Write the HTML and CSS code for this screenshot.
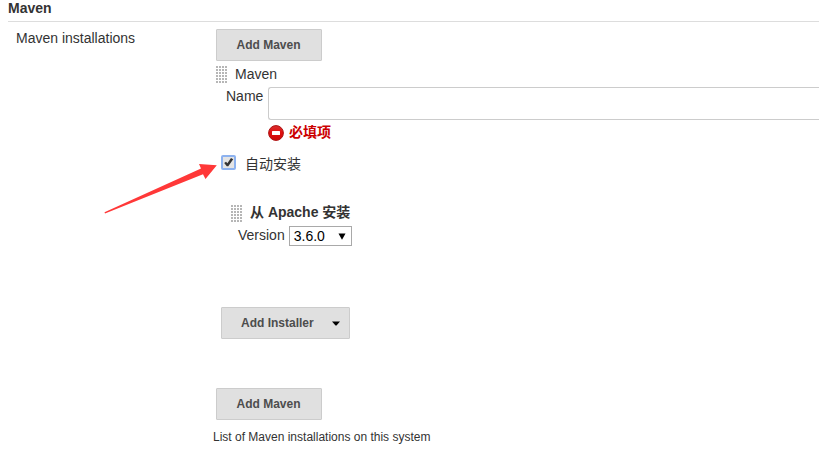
FILE: index.html
```html
<!DOCTYPE html>
<html lang="zh">
<head>
<meta charset="utf-8">
<title>Maven</title>
<link rel="stylesheet" href="styles.css">
</head>
<body>
<main class="config">
  <h2 class="section-title">Maven</h2>
  <div class="setting">
    <div class="setting-name">Maven installations</div>
    <div class="setting-main">
      <button class="btn">Add Maven</button>
      <div class="item-head"><span class="handle"></span><span>Maven</span></div>
      <div class="field">
        <label class="field-label" for="name">Name</label>
        <input class="text-input" id="name" type="text">
      </div>
      <div class="error">
        <svg width="16" height="16" viewBox="0 0 16 16">
          <defs><linearGradient id="red" x1="0" y1="0" x2="0" y2="1"><stop offset="0" stop-color="#d93030"/><stop offset=".45" stop-color="#e01010"/><stop offset="1" stop-color="#cc0808"/></linearGradient></defs>
          <circle cx="8" cy="8" r="7.4" fill="url(#red)" stroke="#ad1414"/>
          <rect x="4" y="6" width="8" height="4" rx=".5" fill="#fff"/>
        </svg>
        <span class="error-text">必填项</span>
      </div>
      <label class="auto">
        <span class="check"><svg width="11" height="11" viewBox="0 0 11 11"><path d="M1.2 5.9 3 4.8 4.4 6.2 8 .9 10.2 2.2 5.3 9.3 3.8 9.3Z" fill="#333"/></svg></span>
        <span>自动安装</span>
      </label>
      <div class="installer">
        <div class="item-head installer-head"><span class="handle"></span><span class="installer-title">从 Apache 安装</span></div>
        <div class="version">
          <span>Version</span>
          <span class="select"><span>3.6.0</span><svg width="8" height="7" viewBox="0 0 8 7"><path d="M.5.5h7L4 6.8Z" fill="#000"/></svg></span>
        </div>
      </div>
      <button class="btn btn-menu">Add Installer<svg width="8" height="5" viewBox="0 0 8 5"><path d="M0 .5h8L4.5 4.5h-1Z" fill="#000"/></svg></button>
      <button class="btn">Add Maven</button>
      <p class="help">List of Maven installations on this system</p>
    </div>
  </div>
  <svg class="arrow" width="114" height="52" viewBox="0 0 114 52"><path d="M.5 49.3 97 5.5 95 1 112.8 2.2 101.5 16 99 11.3 1 50.6Z" fill="#ff3838"/></svg>
</main>
</body>
</html>
```

FILE: styles.css
```css
* { box-sizing: border-box; }
body {
  margin: 0;
  overflow: hidden;
  background: #fff;
  color: #333;
  font: 14px/20px "Liberation Sans", "Noto Sans CJK SC", sans-serif;
}
.config { position: relative; height: 453px; }
.section-title {
  margin: 0 0 0 8px;
  height: 22px;
  padding-bottom: 4px;
  border-bottom: 1px solid #ddd;
  font-size: 14px;
  line-height: 17px;
}
.setting { display: flex; padding: 7px 0 0 16px; }
.setting-name { width: 200px; line-height: 19px; }
.setting-main { flex: 1; display: flex; flex-direction: column; align-items: flex-start; }
.btn {
  width: 106px;
  height: 32px;
  padding: 0 1px 0 0;
  border: 1px solid #ccc;
  border-radius: 1px;
  background: #e0e0e0;
  color: #4d4d4d;
  font: bold 12px/30px "Liberation Sans", sans-serif;
}
.item-head { display: flex; align-items: center; gap: 7px; height: 26px; }
.handle {
  width: 12px;
  height: 17px;
  background: radial-gradient(circle at 1px 1px, #aaa 0, #b5b5b5 .7px, transparent 1.2px) 0 0 / 3px 3px;
}
.field { display: flex; width: 100%; height: 33px; }
.field-label { width: 52px; padding-left: 10px; line-height: 19px; }
.text-input {
  flex: 1;
  min-width: 0;
  height: 33px;
  border: 1px solid #ccc;
  border-right: 0;
  border-radius: 3px 0 0 3px;
}
.error {
  display: flex;
  align-items: center;
  gap: 5px;
  height: 20px;
  margin: 3px 0 0 52px;
  color: #c00;
  font-weight: bold;
}
.error-text, .installer-title { padding-bottom: 2px; }
.auto { display: flex; align-items: center; gap: 9px; height: 20px; margin: 11px 0 0 5px; }
.check {
  display: flex;
  align-items: center;
  justify-content: center;
  width: 15px;
  height: 15px;
  margin-top: -3px;
  border: 2px solid #8db2ef;
  border-radius: 2px;
  background: #e4e4e4;
}
.installer { margin: 26px 0 0 15px; }
.installer-head { font-weight: bold; }
.version { display: flex; gap: 4px; margin-left: 7px; line-height: 18px; }
.select {
  display: flex;
  align-items: center;
  justify-content: space-between;
  width: 63px;
  height: 20px;
  padding: 0 5px 0 4px;
  border: 1px solid #a9a9a9;
  color: #000;
}
.btn-menu {
  display: flex;
  align-items: center;
  justify-content: space-between;
  width: 129px;
  margin: 61px 0 49px 5px;
  padding: 0 9px 0 19px;
}
.help { margin: 9px 0 0 -3px; font-size: 12px; line-height: 16px; }
.arrow { position: absolute; left: 104px; top: 163px; }
```
